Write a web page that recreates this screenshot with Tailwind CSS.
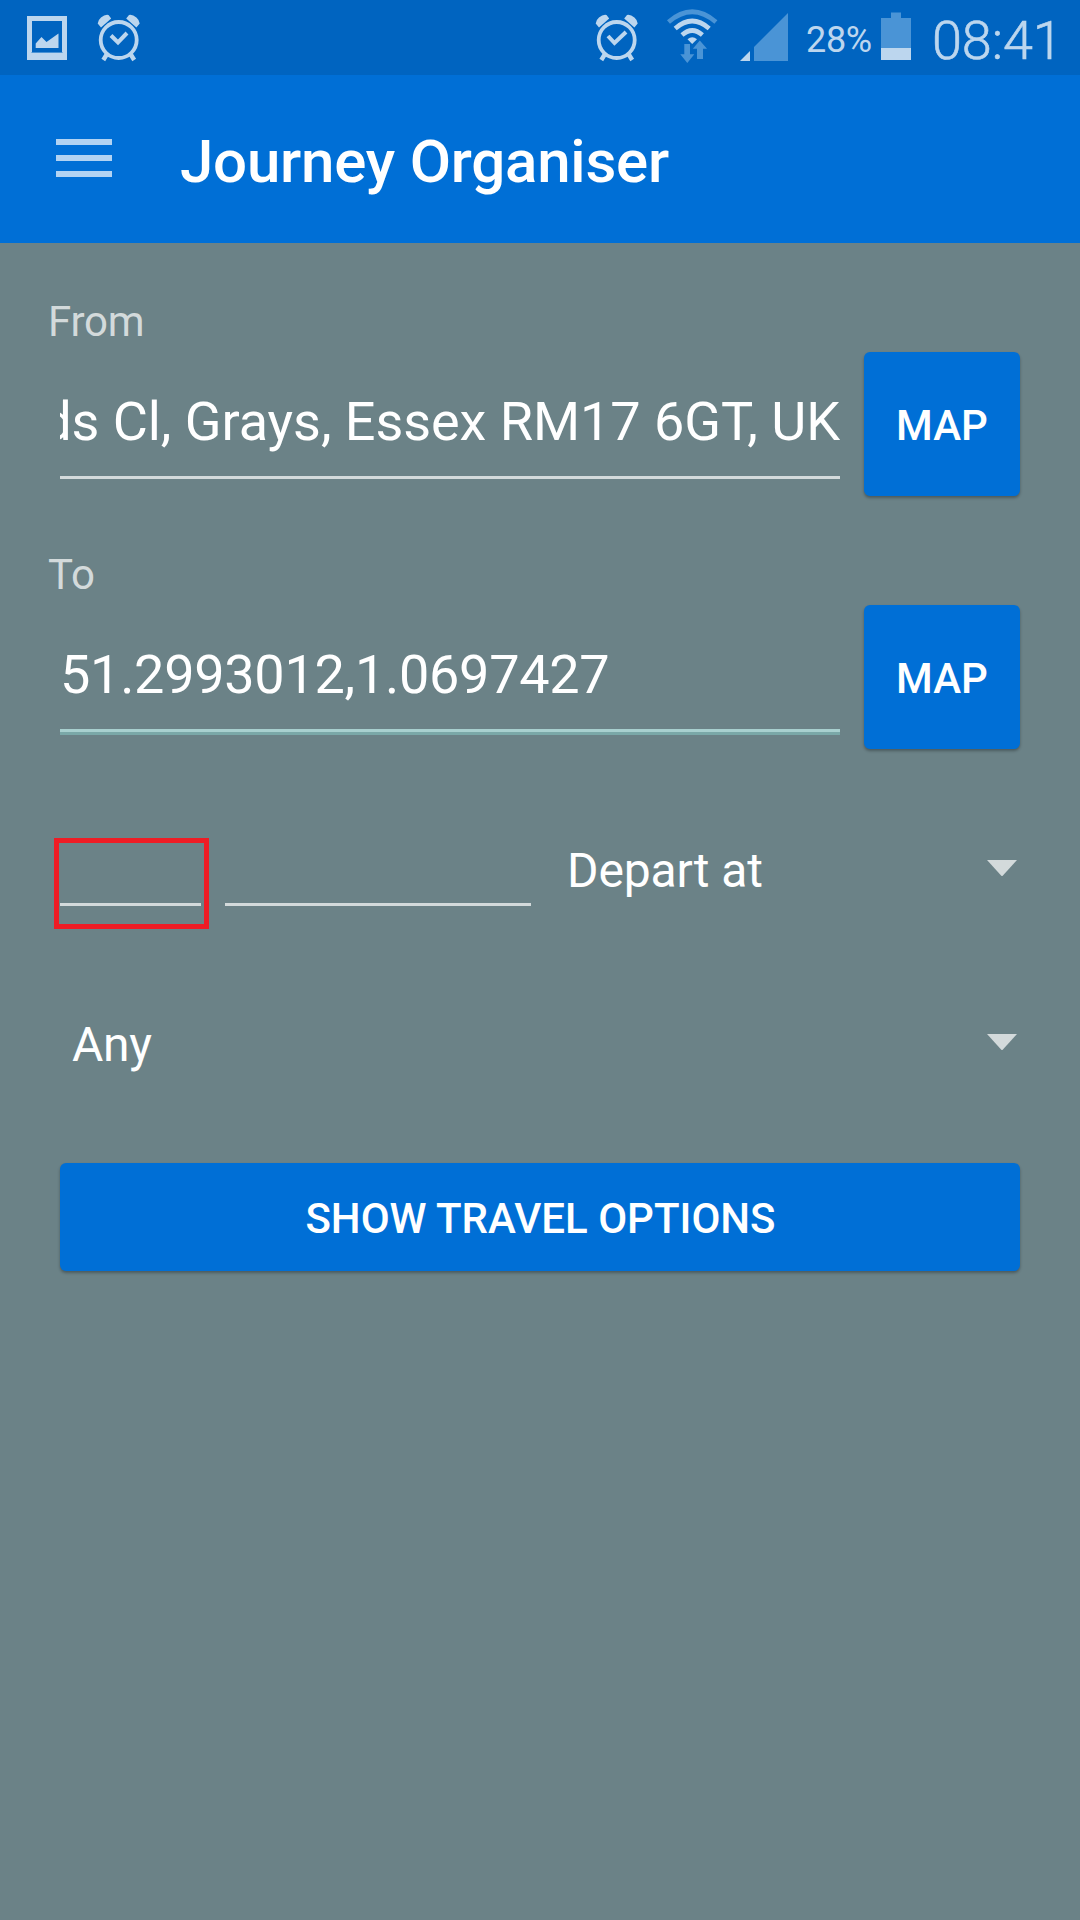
<!DOCTYPE html>
<html lang="en">
<head>
<meta charset="utf-8">
<title>Journey Organiser</title>
<script src="https://cdn.jsdelivr.net/npm/@tailwindcss/browser@4"></script>
</head>
<body class="flex h-[1920px] w-[1080px] flex-col overflow-hidden bg-[#6b8287] font-['Roboto',sans-serif] text-white">

  <!-- System status bar -->
  <header class="flex h-[75px] shrink-0 items-start bg-[#0064c0] pl-[27px] text-[#bcd6ee]">
    <svg class="h-[75px] w-10 shrink-0" viewBox="27 0 40 75" fill="currentColor">
      <path fill-rule="evenodd" d="M27 16H67V60H27ZM32 21V52H62V21Z"/>
      <path d="M35.7 48V43.5L41.5 37L46.5 42L58.5 33.5V48Z"/>
      <path d="M31.5 52h31v1h-31z" fill="#4a94d6"/>
    </svg>
    <svg class="ml-[29px] h-[75px] w-12 shrink-0" viewBox="96 0 48 75" fill="none" stroke="currentColor">
      <circle cx="118.7" cy="40" r="18" stroke-width="3.8"/>
      <path d="M111 35.500L118 42.500L127 33" stroke-width="4"/>
      <path d="M107 54L103.300 60M130.500 54L134.200 60" stroke-width="4.400"/>
      <path d="M101 27.500L97.700 23.500Q98 20 101 17.500Q105 14.200 108.500 15L111.200 18.500Z M136.400 27.500L139.700 23.500Q139.400 20 136.400 17.500Q132.400 14.200 129 15L126.200 18.500Z" fill="currentColor" stroke="none"/>
    </svg>

    <svg class="ml-[450px] h-[75px] w-12 shrink-0" viewBox="96 0 48 75" fill="none" stroke="currentColor">
      <circle cx="118.700" cy="40" r="18" stroke-width="3.800"/>
      <path d="M110 36L116.500 43L128 32" stroke-width="4"/>
      <path d="M107 54L103.300 60M130.500 54L134.200 60" stroke-width="4.400"/>
      <path d="M101 27.500L97.700 23.500Q98 20 101 17.500Q105 14.200 108.500 15L111.200 18.500Z M136.400 27.500L139.700 23.500Q139.400 20 136.400 17.500Q132.400 14.200 129 15L126.200 18.500Z" fill="currentColor" stroke="none"/>
    </svg>
    <svg class="ml-6 h-[75px] w-[52px] shrink-0" viewBox="666 0 52 75" fill="none">
      <path d="M668.500 22Q692.200 1.500 715.900 22" stroke="#4a94d6" stroke-width="4.600"/>
      <path d="M675.200 28.500Q692.200 13.500 709.200 28.500M682 35Q692.200 26 702.400 35" stroke="currentColor" stroke-width="4.600"/>
      <path d="M687.500 39.200Q692.200 35.200 697 39.200L692.200 44Z" fill="currentColor"/>
      <path d="M684.300 44H690V54.300H694.300L687.300 63L680.300 54.300H684.300ZM697 59V48.800H692.800L699.800 40.500L707 48.800H703V59Z" fill="#4a94d6"/>
    </svg>
    <svg class="ml-[22px] h-[75px] w-[48px] shrink-0" viewBox="740 0 48 75">
      <path d="M740 61L750 51V61Z" fill="currentColor"/>
      <path d="M754 47L788 13V61H754Z" fill="#4a94d6"/>
    </svg>
    <span class="ml-[18px] mt-[19px] w-[66px] text-[36px] leading-[42px] tracking-[-0.3px]">28%</span>
    <svg class="ml-[9px] h-[75px] w-[30px] shrink-0" viewBox="881 0 30 75">
      <path d="M891 12.500H901V18H911V48H881V18H891Z" fill="#4a94d6"/>
      <path d="M881 48H911V60H881Z" fill="currentColor"/>
    </svg>
    <span class="ml-[21px] mt-[9px] text-[54px] font-light leading-[64px] tracking-[-0.1px] [-webkit-text-stroke:0.6px_currentColor]">08:41</span>
  </header>

  <!-- App bar -->
  <nav class="flex h-[168px] shrink-0 items-center bg-[#006fd6] pl-14">
    <button class="mb-0.5 flex w-14 flex-col gap-2.5" aria-label="Menu">
      <span class="h-1.5 w-full bg-[#b2d3f3]"></span>
      <span class="h-1.5 w-full bg-[#b2d3f3]"></span>
      <span class="h-1.5 w-full bg-[#b2d3f3]"></span>
    </button>
    <h1 class="ml-[68px] mt-[5px] text-[60px] font-medium leading-[71px] tracking-[-0.22px]">Journey Organiser</h1>
  </nav>

  <main class="flex flex-col pl-[60px] pr-[60px] pt-[53px]">
    <!-- Origin -->
    <section class="flex h-[253px] flex-col">
      <label class="-ml-3 h-14 pt-px text-[42px] leading-[50px] tracking-[-0.2px] text-[#d3dadb]">From</label>
      <div class="flex gap-6">
        <div class="flex h-[127px] w-[780px] justify-end overflow-hidden border-b-[3px] border-[#d3dadb]">
          <span class="mt-[38px] whitespace-nowrap text-[54px] leading-[64px] tracking-[-0.06px]">ds Cl, Grays, Essex RM17 6GT, UK</span>
        </div>
        <button class="h-36 w-[156px] rounded-[6px] bg-[#006fd6] pt-[3px] text-[42px] font-medium shadow-[0_2px_3px_rgba(0,0,0,0.3)]">MAP</button>
      </div>
    </section>

    <!-- Destination -->
    <section class="flex h-[253px] flex-col">
      <label class="-ml-3 h-14 pt-px text-[42px] leading-[50px] text-[#d3dadb]">To</label>
      <div class="flex gap-6">
        <div class="flex h-[130px] w-[780px] flex-col overflow-hidden border-b-[3px] border-[#7aa8a8]">
          <span class="h-[127px] border-b-[3px] border-[#a8d0cf] pt-[38px] text-[54px] leading-[64px] tracking-[-0.28px]">51.2993012,1.0697427</span>
        </div>
        <button class="h-36 w-[156px] rounded-[6px] bg-[#006fd6] pt-[3px] text-[42px] font-medium shadow-[0_2px_3px_rgba(0,0,0,0.3)]">MAP</button>
      </div>
    </section>

    <!-- Date, time and departure mode -->
    <section class="-ml-1.5 mt-9 flex h-[91px]">
      <div class="h-[91px] w-[155px] border-[5px] border-[#ee1c25] pl-px">
        <div class="h-[63px] w-[141px] border-b-[3px] border-[#d3dadb]"></div>
      </div>
      <div class="ml-4 h-[68px] w-[306px] border-b-[3px] border-[#d3dadb]"></div>
      <div class="ml-9 flex flex-1 justify-between pr-[3px]">
        <span class="mt-[5px] text-[48px] leading-[56px] tracking-[-0.12px]">Depart at</span>
        <svg class="mt-[22px] h-4 w-[30px]" viewBox="0 0 30 16"><path d="M0 0H30L15 16.500Z" fill="#d3dadb"/></svg>
      </div>
    </section>

    <!-- Transport type -->
    <section class="mt-[88px] flex h-[60px] justify-between pl-3 pr-[3px]">
      <span class="text-[48px] leading-[56px] tracking-[-0.3px]">Any</span>
      <svg class="mt-[17px] h-4 w-[30px]" viewBox="0 0 30 16"><path d="M0 0H30L15 16.500Z" fill="#d3dadb"/></svg>
    </section>

    <button class="mt-[86px] h-[108px] rounded-[6px] bg-[#006fd6] pl-px pt-[3px] text-[42px] font-medium shadow-[0_2px_3px_rgba(0,0,0,0.3)]">SHOW TRAVEL OPTIONS</button>
  </main>
</body>
</html>
